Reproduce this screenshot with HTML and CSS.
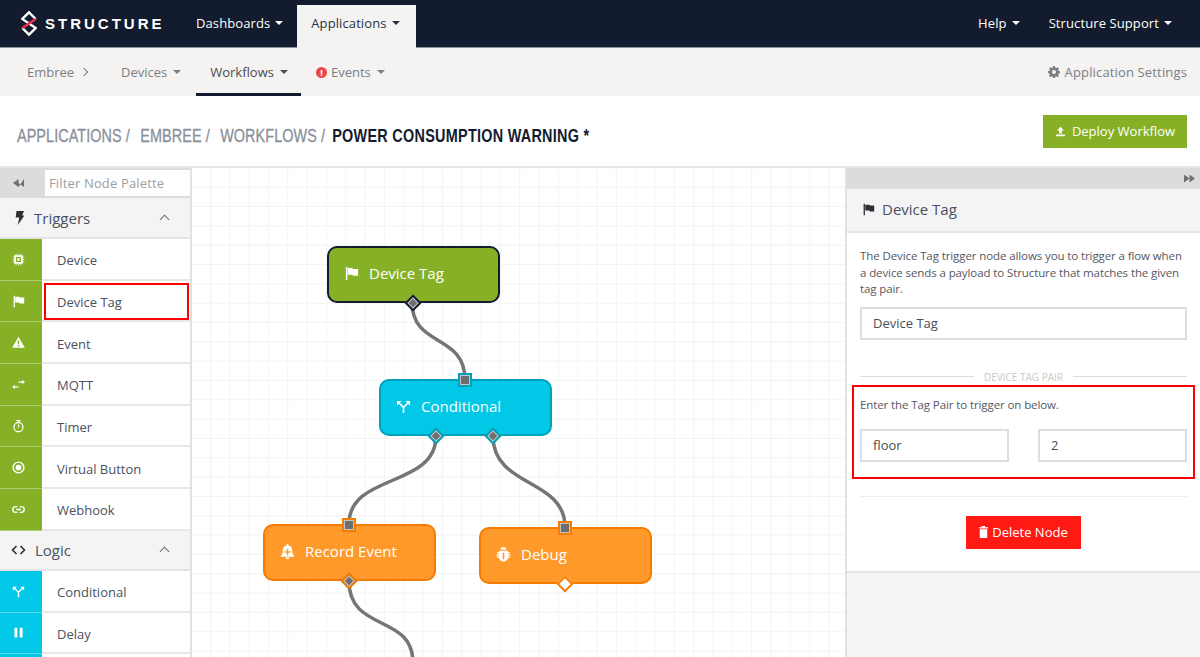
FILE: index.html
```html
<!DOCTYPE html>
<html lang="en">
<head>
  <meta charset="UTF-8">
  <title>Power Consumption Warning - Structure</title>
  <link rel="stylesheet" href="styles.css">
</head>
<body>
  <svg class="icon-defs" width="0" height="0">
    <defs>
      <symbol id="i-flag" viewBox="0 0 16 16"><path d="M2 1h1.600v14H2zM4 2h5l.6 1.200H15v7.300H9.500L8.900 9.300H4z"/></symbol>
      <symbol id="i-chip" viewBox="0 0 16 16"><path fill-rule="evenodd" d="M4 2.500h8A1.500 1.500 0 0 1 13.500 4v8a1.500 1.500 0 0 1-1.500 1.500H4A1.500 1.500 0 0 1 2.500 12V4A1.500 1.500 0 0 1 4 2.500zM5 5v6h6V5zM6.500 6.500h3v3h-3zM4.500 1h1v2h-1zM7.500 1h1v2h-1zM10.500 1h1v2h-1zM4.500 13h1v2h-1zM7.500 13h1v2h-1zM10.500 13h1v2h-1zM1 4.500h2v1H1zM1 7.500h2v1H1zM1 10.500h2v1H1zM13 4.500h2v1h-2zM13 7.500h2v1h-2zM13 10.500h2v1h-2z"/></symbol>
      <symbol id="i-warn" viewBox="0 0 16 16"><path fill-rule="evenodd" d="M8 1l7.800 13.500H.2zM7 5.500l.3 4.500h1.400L9 5.500zM7 11v2h2v-2z"/></symbol>
      <symbol id="i-arrows" viewBox="0 0 16 16"><path d="M8 4.300h4.500V2.500L16 5l-3.500 2.500V5.700H8zM8 11.700H3.500v1.800L0 11l3.500-2.500v1.800H8z"/></symbol>
      <symbol id="i-timer" viewBox="0 0 16 16"><path fill-rule="evenodd" d="M5.500 0h5v1.500H8.800v1.100A6.300 6.300 0 1 1 7.200 2.600V1.500H5.500zM8 4a4.800 4.800 0 1 0 0 9.600A4.800 4.800 0 0 0 8 4zM7.300 5.500h1.400v3.800H7.300z"/></symbol>
      <symbol id="i-dot" viewBox="0 0 16 16"><path fill-rule="evenodd" d="M8 .5a7.500 7.500 0 1 1 0 15 7.500 7.500 0 0 1 0-15zM8 2.300a5.700 5.700 0 1 0 0 11.400A5.700 5.700 0 0 0 8 2.300zM8 4.500a3.500 3.500 0 1 1 0 7 3.500 3.500 0 0 1 0-7z"/></symbol>
      <symbol id="i-link" viewBox="0 0 16 16"><path fill="none" stroke="currentColor" stroke-width="1.700" d="M6.500 11.500H4.500a3.500 3.500 0 0 1 0-7h2M9.500 4.500h2a3.500 3.500 0 0 1 0 7h-2M5 8h6"/></symbol>
      <symbol id="i-branch" viewBox="0 0 16 16"><path fill="none" stroke="currentColor" stroke-width="1.700" d="M8 15V9L3 4M8 9l5-5"/><path d="M1 2h5L1 7zM15 2h-5l5 5z"/></symbol>
      <symbol id="i-pause" viewBox="0 0 16 16"><path d="M3 2h3.500v12H3zM9.500 2H13v12H9.500z"/></symbol>
      <symbol id="i-bolt" viewBox="0 0 16 16"><path d="M4 0h8.500l-2 5H13L5.500 16l1.700-8.500H3z"/></symbol>
      <symbol id="i-code" viewBox="0 0 15 10"><path fill="none" stroke="currentColor" stroke-width="1.600" d="M5.500 1 1.500 5l4 4M9.500 1l4 4-4 4"/></symbol>
      <symbol id="i-bell" viewBox="0 0 16 16"><path fill-rule="evenodd" d="M8 0a1 1 0 0 1 1 1v.6c2.500.5 4 2.500 4 5 0 3 .6 4.600 2 5.900v1H1v-1c1.400-1.300 2-2.900 2-5.900 0-2.500 1.500-4.500 4-5V1a1 1 0 0 1 1-1zM7.200 5v2.700H4.800v1.600h2.400V12h1.600V9.300h2.400V7.700H8.800V5zM6 14.500h4a2 2 0 0 1-4 0z"/></symbol>
      <symbol id="i-bug" viewBox="0 0 16 16"><path fill-rule="evenodd" d="M5 3a3 3 0 0 1 6 0zM4 4h8a2 2 0 0 1 1 1.500h2v1.300h-2V8h2.500v1.300H13v1.200h2v1.300h-2.200A5 5 0 0 1 3.200 11.800H1v-1.300h2V9.300H.5V8H3V6.800H1V5.500h2A2 2 0 0 1 4 4zM7.200 6v7h1.600V6z"/></symbol>
      <symbol id="i-trash" viewBox="0 0 12 16"><path d="M4 0h4l.6 1.500H12V3.300H0V1.500h3.400zM1 4.300h10V15a1 1 0 0 1-1 1H2a1 1 0 0 1-1-1z"/></symbol>
      <symbol id="i-upload" viewBox="0 0 16 16"><path d="M8 1l5 5.500H10v4.300H6V6.500H3zM1.500 12.500h13V15h-13z"/></symbol>
      <symbol id="i-cog" viewBox="0 0 16 16"><path fill-rule="evenodd" d="M6.700 0h2.600l.4 2.100 1.300.6 1.800-1.200 1.900 1.900-1.200 1.800.6 1.300 2.100.4v2.600l-2.100.4-.6 1.300 1.200 1.800-1.900 1.900-1.800-1.200-1.300.6-.4 2.100H6.700l-.4-2.100-1.300-.6-1.800 1.200-1.900-1.900 1.200-1.800-.6-1.300L0 9.300V6.700l2.100-.4.6-1.300-1.200-1.800 1.900-1.900L5.200 2.700l1.300-.6zM8 5.300a2.700 2.700 0 1 0 0 5.400 2.700 2.700 0 0 0 0-5.400z"/></symbol>
    </defs>
  </svg>

  <header class="topbar">
    <a class="brand">
      <svg class="brand-mark" viewBox="0 0 16 25" width="16" height="25">
        <path d="M8 12.500 1.300 8 8 1.300 14.700 8" fill="none" stroke="#fff" stroke-width="2.400"/>
        <path d="M8 12.500 14.700 17 8 23.700 1.300 17" fill="none" stroke="#fff" stroke-width="2.400"/>
        <path d="M1.300 17 14.700 8" stroke="#e8304a" stroke-width="2.600"/>
      </svg>
      <span class="brand-name">STRUCTURE</span>
    </a>
    <nav class="topnav">
      <a class="topnav-item">Dashboards<i class="caret"></i></a>
      <a class="topnav-item active">Applications<i class="caret"></i></a>
    </nav>
    <nav class="topnav topnav-right">
      <a class="topnav-item">Help<i class="caret"></i></a>
      <a class="topnav-item">Structure Support<i class="caret"></i></a>
    </nav>
  </header>

  <nav class="subnav">
    <a class="subnav-item crumb">Embree<span class="chev"></span></a>
    <a class="subnav-item">Devices<i class="caret"></i></a>
    <a class="subnav-item active">Workflows<i class="caret"></i></a>
    <a class="subnav-item"><span class="alert-dot">!</span>Events<i class="caret"></i></a>
    <a class="subnav-settings"><svg class="icon"><use href="#i-cog"/></svg>Application Settings</a>
  </nav>

  <div class="titlebar">
    <h1 class="page-title">
      <span class="trail">Applications /</span>
      <span class="trail">Embree /</span>
      <span class="trail">Workflows /</span>
      <strong>Power Consumption Warning *</strong>
    </h1>
    <button class="btn-deploy"><svg class="icon"><use href="#i-upload"/></svg>Deploy Workflow</button>
  </div>

  <main class="workspace">
    <aside class="palette">
      <div class="palette-filter">
        <span class="double-arrow left"></span>
        <div class="filter-input">Filter Node Palette</div>
      </div>

      <div class="palette-head">
        <svg class="icon head-icon"><use href="#i-bolt"/></svg>
        <span>Triggers</span>
        <i class="chev-up"></i>
      </div>
      <div class="palette-row green"><span class="swatch"><svg class="icon"><use href="#i-chip"/></svg></span><span class="row-label">Device</span></div>
      <div class="palette-row green picked"><span class="swatch"><svg class="icon"><use href="#i-flag"/></svg></span><span class="row-label">Device Tag</span></div>
      <div class="palette-row green"><span class="swatch"><svg class="icon"><use href="#i-warn"/></svg></span><span class="row-label">Event</span></div>
      <div class="palette-row green"><span class="swatch"><svg class="icon"><use href="#i-arrows"/></svg></span><span class="row-label">MQTT</span></div>
      <div class="palette-row green"><span class="swatch"><svg class="icon"><use href="#i-timer"/></svg></span><span class="row-label">Timer</span></div>
      <div class="palette-row green"><span class="swatch"><svg class="icon"><use href="#i-dot"/></svg></span><span class="row-label">Virtual Button</span></div>
      <div class="palette-row green"><span class="swatch"><svg class="icon"><use href="#i-link"/></svg></span><span class="row-label">Webhook</span></div>

      <div class="palette-head">
        <svg class="code-icon"><use href="#i-code"/></svg>
        <span>Logic</span>
        <i class="chev-up"></i>
      </div>
      <div class="palette-row blue"><span class="swatch"><svg class="icon"><use href="#i-branch"/></svg></span><span class="row-label">Conditional</span></div>
      <div class="palette-row blue"><span class="swatch"><svg class="icon"><use href="#i-pause"/></svg></span><span class="row-label">Delay</span></div>
      <div class="palette-row blue"><span class="swatch"></span><span class="row-label"></span></div>
    </aside>

    <section class="canvas">
      <svg class="wires" width="653" height="489">
        <g fill="none" stroke="#757575" stroke-width="3.500">
          <path d="M220 134C220 180 273 165 273 212"/>
          <path d="M244 268C244 320 157 305 157 356"/>
          <path d="M301 268C301 320 373 310 373 359"/>
          <path d="M157 413C157 465 221 445 221 495"/>
        </g>
      </svg>

      <div class="node node-green selected node-a"><svg class="icon"><use href="#i-flag"/></svg>Device Tag
        <i class="port out mid filled"></i>
      </div>
      <div class="node node-blue node-b"><svg class="icon"><use href="#i-branch"/></svg>Conditional
        <i class="port in filled"></i>
        <i class="port out left-out filled"></i>
        <i class="port out right-out filled"></i>
      </div>
      <div class="node node-orange node-c"><svg class="icon"><use href="#i-bell"/></svg>Record Event
        <i class="port in filled"></i>
        <i class="port out mid filled"></i>
      </div>
      <div class="node node-orange node-d"><svg class="icon"><use href="#i-bug"/></svg>Debug
        <i class="port in filled"></i>
        <i class="port out mid"></i>
      </div>
    </section>

    <aside class="inspector">
      <div class="inspector-top"><span class="double-arrow right"></span></div>
      <div class="inspector-head"><svg class="icon"><use href="#i-flag"/></svg>Device Tag</div>
      <div class="inspector-body">
        <p class="help">The Device Tag trigger node allows you to trigger a flow when a device sends a payload to Structure that matches the given tag pair.</p>
        <div class="field">Device Tag</div>
        <div class="divider"><span>DEVICE TAG PAIR</span></div>
        <div class="tag-pair">
          <p class="help">Enter the Tag Pair to trigger on below.</p>
          <div class="pair-fields">
            <div class="field">floor</div>
            <div class="field">2</div>
          </div>
        </div>
        <hr class="rule">
        <div class="actions">
          <button class="btn-delete"><svg class="icon"><use href="#i-trash"/></svg>Delete Node</button>
        </div>
      </div>
      <div class="inspector-foot"></div>
    </aside>
  </main>
</body>
</html>
```

FILE: styles.css
```css
* {
  box-sizing: border-box;
}
html, body {
  height: 100%;
}
body {
  margin: 0;
  height: 657px;
  overflow: hidden;
  display: flex;
  flex-direction: column;
  background-color: #fff;
  color: #4a5160;
  font-family: "Open Sans", "Noto Sans", sans-serif;
  font-size: 13px;
}
p {
  margin: 0;
}
.icon-defs {
  position: absolute;
}
.icon {
  width: 13px;
  height: 13px;
  fill: currentColor;
  flex: none;
}
.caret {
  display: inline-block;
  width: 0;
  height: 0;
  margin-left: 6px;
  border-left: 4px solid transparent;
  border-right: 4px solid transparent;
  border-top: 4px solid currentColor;
}

/* top bar */
.topbar {
  height: 48px;
  flex: none;
  display: flex;
  align-items: stretch;
  background-color: #121c2e;
  border-bottom: 1px solid #8f949b;
  color: #fff;
}
.brand {
  display: flex;
  align-items: center;
  gap: 8px;
  width: 182px;
  padding-left: 21px;
}
.brand-name {
  font-family: "Liberation Sans", sans-serif;
  font-size: 15px;
  font-weight: bold;
  letter-spacing: 3px;
}
.topnav {
  display: flex;
}
.topnav-right {
  margin-left: auto;
}
.topnav-item {
  display: flex;
  align-items: center;
  padding: 0 14px 2px;
  letter-spacing: 0.100px;
}
.topnav-item .caret {
  margin-left: 5px;
}
.topnav-right .topnav-item:last-child {
  padding-right: 28px;
  padding-left: 15px;
}
.topnav-item.active {
  margin-top: 5px;
  margin-bottom: -1px;
  padding: 0 16px 7px 14px;
  background-color: #f4f3f1;
  color: #2a3242;
}

/* second row */
.subnav {
  height: 48px;
  flex: none;
  display: flex;
  align-items: stretch;
  background-color: #f4f3f1;
  color: #7b7e85;
  padding-left: 12px;
}
.subnav-item {
  display: flex;
  align-items: center;
  padding: 0 15px;
}
.crumb {
  width: 94px;
}
.chev {
  width: 6px;
  height: 6px;
  margin-left: 7px;
  border-top: 1px solid #7b7e85;
  border-right: 1px solid #7b7e85;
  transform: rotate(45deg);
}
.subnav-item.active {
  color: #4a4d55;
  border-bottom: 3px solid #121c2e;
  padding: 3px 13px 0 14px;
}
.alert-dot {
  width: 11px;
  height: 11px;
  margin-right: 4px;
  border-radius: 50%;
  background-color: #e8464a;
  color: #fff;
  font-size: 9px;
  font-weight: bold;
  line-height: 11px;
  text-align: center;
}
.subnav-settings {
  margin-left: auto;
  padding-right: 13px;
  display: flex;
  align-items: center;
  gap: 5px;
  letter-spacing: 0.150px;
}
.subnav-settings .icon {
  width: 12px;
  height: 12px;
}

/* title row */
.titlebar {
  height: 72px;
  flex: none;
  display: flex;
  align-items: center;
  justify-content: space-between;
  padding: 0 13px 0 17px;
  border-bottom: 2px solid #e4e4e4;
}
.page-title {
  margin: 0;
  padding-top: 10px;
  display: flex;
  gap: 13px;
  font-family: "Liberation Sans", sans-serif;
  font-size: 18px;
  font-weight: normal;
  letter-spacing: 0.100px;
  text-transform: uppercase;
  white-space: nowrap;
  color: #8a8f99;
  -webkit-text-stroke: 0.300px #8a8f99;
  transform: scaleX(0.8);
  transform-origin: left center;
  width: 560px;
}
.page-title strong {
  margin-left: -4px;
  letter-spacing: 0.350px;
  color: #121c2e;
  -webkit-text-stroke: 0;
}
.btn-deploy {
  width: 144px;
  height: 33px;
  display: flex;
  align-items: center;
  justify-content: center;
  gap: 6px;
  border: none;
  background-color: #86b126;
  color: #fff;
  font: inherit;
}
.btn-deploy .icon {
  width: 11px;
  height: 11px;
}

/* main area */
.workspace {
  flex: 1;
  min-height: 0;
  display: flex;
}
.palette {
  width: 192px;
  flex: none;
  overflow: hidden;
  border-right: 2px solid #e2e2e2;
}
.palette-filter {
  height: 30px;
  display: flex;
  align-items: center;
  padding: 0 0 0 13px;
  background-color: #dcdcdc;
}
.double-arrow {
  display: inline-block;
  width: 11px;
  height: 8px;
  background-color: #6d6f73;
}
.double-arrow.left {
  clip-path: polygon(0 50%, 50% 0, 50% 100%, 100% 0, 100% 100%, 50% 50%, 50% 100%);
}
.double-arrow.right {
  clip-path: polygon(0 0, 50% 50%, 50% 0, 100% 50%, 50% 100%, 50% 50%, 0 100%);
}
.filter-input {
  width: 145px;
  height: 26px;
  margin-left: auto;
  padding-left: 4px;
  background-color: #fff;
  color: #9a9da3;
  line-height: 26px;
  letter-spacing: 0.150px;
}
.palette-head {
  height: 40px;
  display: flex;
  align-items: center;
  padding: 0 22px 0 13px;
  gap: 7px;
  background-color: #f4f4f4;
  border-bottom: 2px solid #e4e4e4;
  font-size: 15px;
}
.palette-filter + .palette-head {
  height: 41px;
}
.head-icon {
  width: 14px;
  height: 14px;
  color: #2c2f35;
}
.code-icon {
  width: 15px;
  height: 10px;
  margin: 0 2px 0 -2px;
  color: #2c2f35;
  flex: none;
}
.chev-up {
  width: 7px;
  height: 7px;
  margin: 4px 0 0 auto;
  border-top: 1.500px solid #6d6f73;
  border-left: 1.500px solid #6d6f73;
  transform: rotate(45deg);
}
.palette-row {
  height: 41.700px;
  display: flex;
  align-items: stretch;
  border-bottom: 2px solid #e8e8e8;
}
.swatch {
  width: 42px;
  flex: none;
  margin-bottom: -2px;
  display: flex;
  align-items: center;
  justify-content: center;
  padding-right: 5px;
  color: #fff;
  border-bottom: 1px solid rgba(255, 255, 255, 0.35);
}
.green .swatch {
  background-color: #86b126;
}
.blue .swatch {
  background-color: #00c8e6;
}
.row-label {
  position: relative;
  flex: 1;
  display: flex;
  align-items: center;
  padding: 3px 0 0 15px;
}
.picked .row-label::after {
  content: "";
  position: absolute;
  top: 2px;
  left: 2px;
  right: 1px;
  bottom: 0;
  border: 2px solid #f00;
}

/* canvas */
.canvas {
  position: relative;
  flex: 1;
  overflow: hidden;
  background-color: #fff;
  background-image:
    linear-gradient(#f2f3f4 1px, transparent 1px),
    linear-gradient(90deg, #f2f3f4 1px, transparent 1px);
  background-size: 19.330px 19.330px;
  background-position: 18px 18.700px;
}
.wires {
  position: absolute;
  top: 0;
  left: 0;
}
.node {
  position: absolute;
  width: 173px;
  height: 57px;
  display: flex;
  align-items: center;
  gap: 10px;
  padding: 0 0 3px 15px;
  border: 2.500px solid;
  border-radius: 10px;
  color: #fff;
  font-size: 15px;
}
.node .icon {
  width: 15px;
  height: 15px;
}
.node-green {
  background-color: #86b126;
  border-color: #6f9420;
}
.node-green.selected {
  border-color: #121c2e;
}
.node-blue {
  background-color: #00c8e6;
  border-color: #00a2bb;
}
.node-orange {
  background-color: #ff9a2a;
  border-color: #f57c00;
}
.node-a {
  left: 135px;
  top: 78px;
}
.node-b {
  left: 187px;
  top: 211px;
}
.node-c {
  left: 71px;
  top: 356px;
}
.node-d {
  left: 287px;
  top: 359px;
}
.port {
  position: absolute;
  width: 10px;
  height: 10px;
  background-color: #fff;
  border: 2px solid;
  border-color: inherit;
}
.port.filled {
  background-color: #6e6e6e;
  outline: 1px solid rgba(255, 255, 255, 0.6);
  outline-offset: -3px;
}
.port.in {
  top: -8px;
  left: 76.500px;
  width: 14px;
  height: 14px;
}
.port.out {
  bottom: -7.500px;
  transform: rotate(45deg);
  width: 12px;
  height: 12px;
}
.port.mid {
  left: 77.500px;
}
.port.left-out {
  left: 48.500px;
}
.port.right-out {
  left: 105.500px;
}

/* right panel */
.inspector {
  width: 355px;
  flex: none;
  display: flex;
  flex-direction: column;
  border-left: 2px solid #e2e2e2;
}
.inspector-top {
  height: 21px;
  flex: none;
  display: flex;
  align-items: center;
  justify-content: flex-end;
  padding-right: 5px;
  background-color: #dcdcdc;
}
.inspector-head {
  height: 44px;
  flex: none;
  display: flex;
  align-items: center;
  gap: 7px;
  padding: 0 0 2px 15px;
  background-color: #f4f4f4;
  border-bottom: 2px solid #e4e4e4;
  font-size: 15px;
}
.inspector-head .icon {
  color: #2c2f35;
}
.inspector-body {
  height: 340px;
  flex: none;
  padding: 15px 13px 0 13px;
  border-bottom: 2px solid #e4e4e4;
}
.help {
  font-size: 11.500px;
  letter-spacing: -0.100px;
  line-height: 16.500px;
  color: #55585f;
}
.field {
  height: 33px;
  margin-top: 9px;
  padding-left: 11px;
  border: 2px solid #ddd;
  line-height: 29px;
  color: #4a4d55;
}
.divider {
  display: flex;
  align-items: center;
  gap: 10px;
  margin-top: 30px;
  color: #c9c9c9;
  font-size: 10px;
}
.divider::before, .divider::after {
  content: "";
  flex: 1;
  height: 1px;
  background-color: #ddd;
}
.tag-pair {
  margin: 1px -8px 0;
  padding: 10px 6px 0;
  height: 94px;
  border: 2px solid #f00;
}
.pair-fields {
  display: grid;
  grid-template-columns: 149px 149px;
  justify-content: space-between;
  margin-top: 7px;
}
.rule {
  margin: 17px 0 0;
  border: none;
  height: 1px;
  background-color: #eee;
}
.actions {
  display: flex;
  justify-content: center;
  margin-top: 19px;
}
.btn-delete {
  width: 115px;
  height: 33px;
  display: flex;
  align-items: center;
  justify-content: center;
  gap: 4px;
  border: none;
  background-color: #ff1a14;
  color: #fff;
  font: inherit;
}
.btn-delete .icon {
  width: 9px;
  height: 12px;
}
.inspector-foot {
  flex: 1;
  background-color: #f4f4f4;
}
```
